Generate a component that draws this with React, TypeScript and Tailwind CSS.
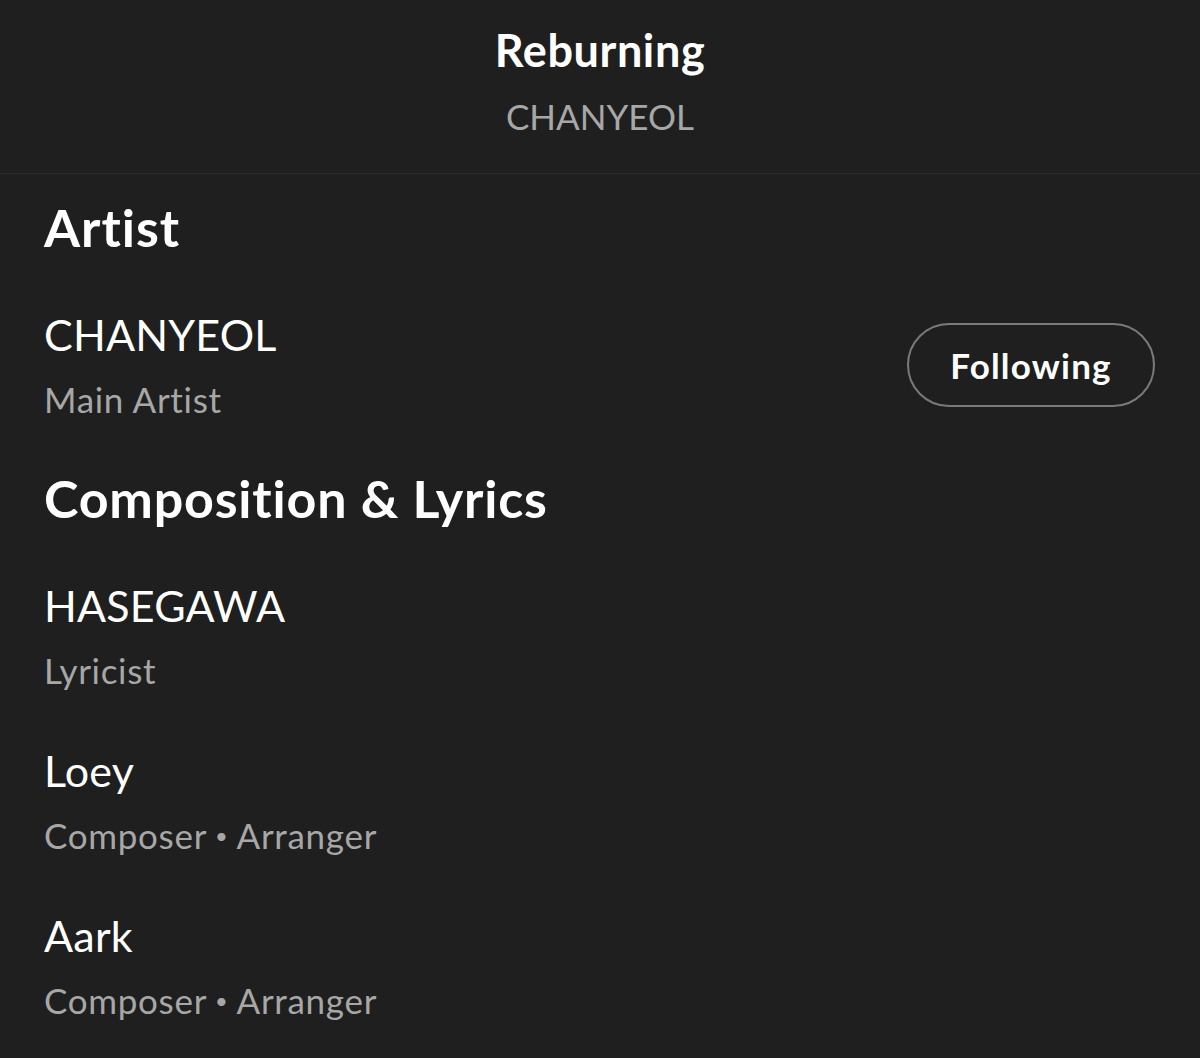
const FONT = "font-['Lato','Noto_Sans',sans-serif] [font-variant-ligatures:none]";

type Credit = { name: string; roles: string[] };

const writers: Credit[] = [
  { name: "HASEGAWA", roles: ["Lyricist"] },
  { name: "Loey", roles: ["Composer", "Arranger"] },
  { name: "Aark", roles: ["Composer", "Arranger"] },
];

function CreditRow({ credit, action }: { credit: Credit; action?: React.ReactNode }) {
  return (
    <div className="flex items-center justify-between">
      <div className="flex flex-col">
        <div className="text-[43px] leading-none text-white tracking-[0.2px]">{credit.name}</div>
        <div className="mt-[26px] text-[35px] leading-none tracking-[0.7px] text-[#a7a7a7]">
          {credit.roles.map((r, i) => (
            <span key={r}>
              {i > 0 ? <span className="mx-[8px] text-[22px] align-[5px]">•</span> : null}
              {r}
            </span>
          ))}
        </div>
      </div>
      {action}
    </div>
  );
}

export default function App() {
  return (
    <div className={`${FONT} min-h-[1058px] w-full bg-[#1f1f1f] text-white`}>
      <header className="flex flex-col items-center border-b border-[#2c2c2c] pb-[39px] pt-[28px]">
        <h1 className="text-[45px] font-bold leading-none tracking-[0.6px]">Reburning</h1>
        <p className="mt-[26px] text-[35px] leading-none text-[#a7a7a7]">CHANYEOL</p>
      </header>

      <main className="px-[44px] pt-[27px]">
        <section>
          <h2 className="text-[52px] font-bold leading-none tracking-[1px]">Artist</h2>
          <div className="mt-[60px]">
            <CreditRow
              credit={{ name: "CHANYEOL", roles: ["Main Artist"] }}
              action={
                <button className="mr-[1px] flex h-[84px] w-[248px] items-center justify-center rounded-full border-2 border-[#7a7a7a] text-[35px] font-bold tracking-[1.2px] text-white">
                  Following
                </button>
              }
            />
          </div>
        </section>

        <section className="mt-[55px]">
          <h2 className="text-[52px] font-bold leading-none tracking-[0.8px]">Composition &amp; Lyrics</h2>
          <div className="mt-[60px] flex flex-col gap-[61px]">
            {writers.map((w) => (
              <CreditRow key={w.name} credit={w} />
            ))}
          </div>
        </section>
      </main>
    </div>
  );
}
